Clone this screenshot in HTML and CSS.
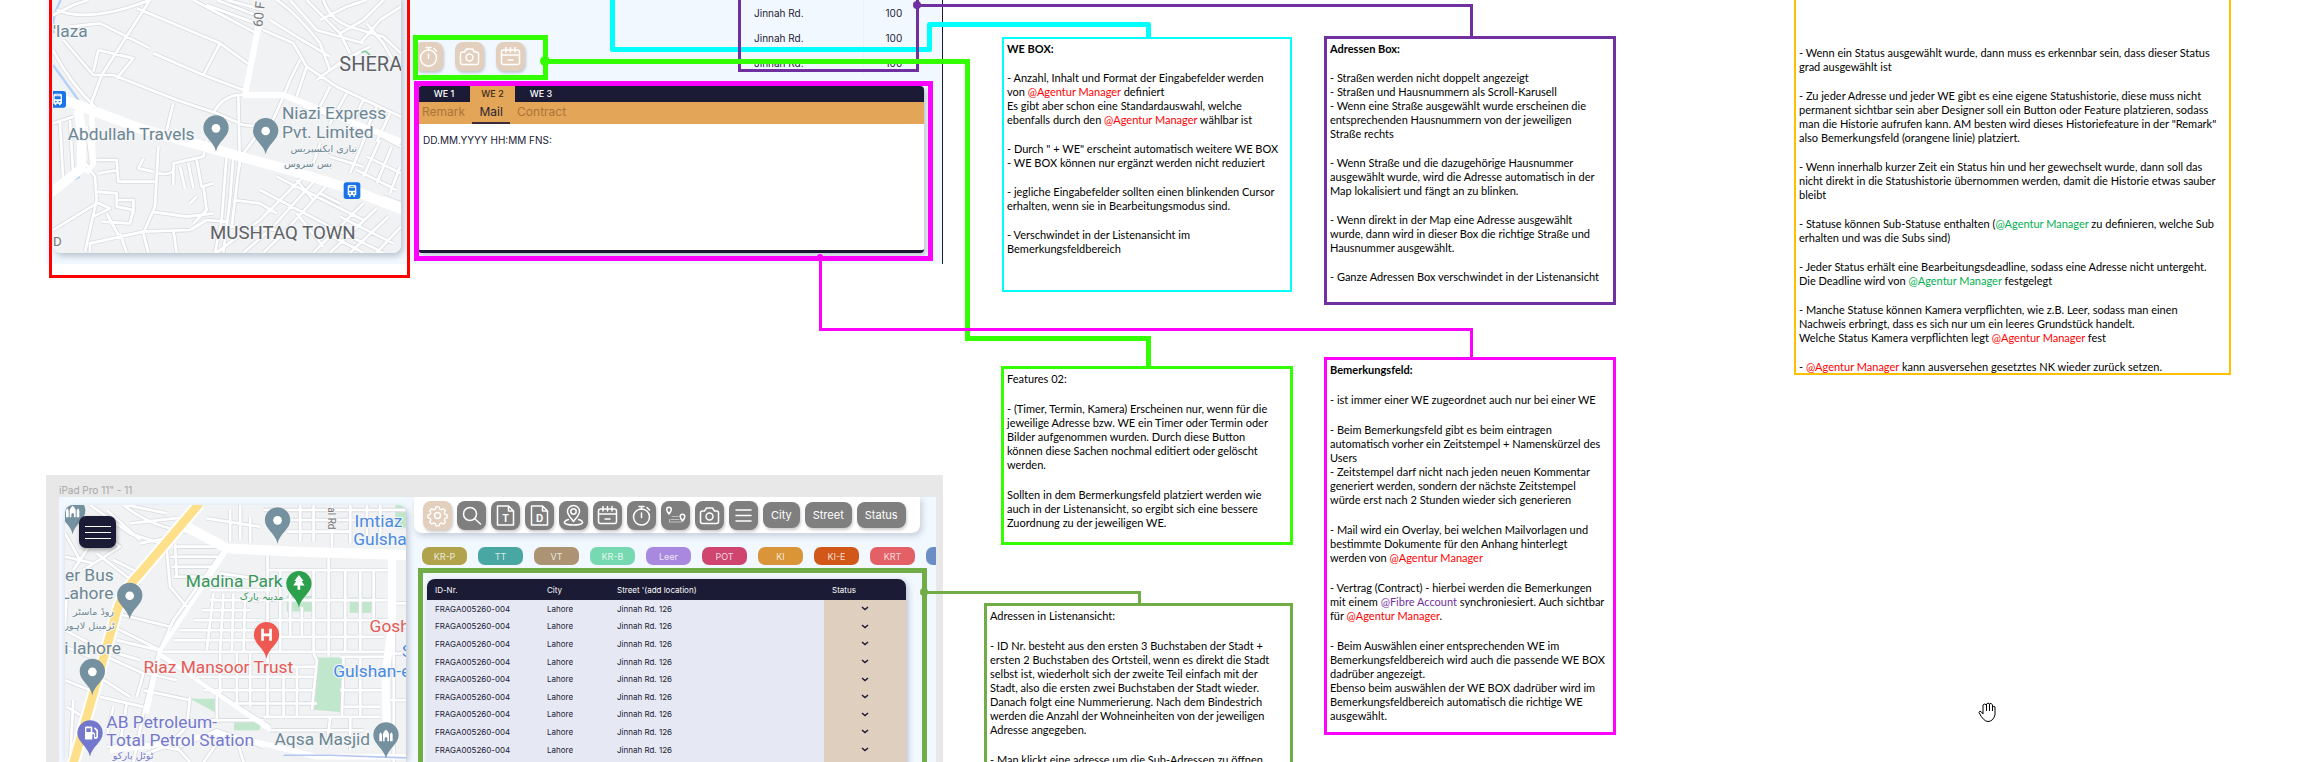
FILE: index.html
```html
<!DOCTYPE html>
<html lang="de">
<head>
<meta charset="utf-8">
<title>Board – Anmerkungen</title>
<link rel="stylesheet" href="styles.css">
</head>
<body>
<svg class="defs" aria-hidden="true">
  <defs>
    <path id="pin" d="M0 71C-6 40-38 28-38 0A38 38 0 1 1 38 0C38 28 6 40 0 71Z"/>
    <g id="bus"><rect x="-25" y="-25" width="50" height="50" rx="8" fill="#1a73e8"/><path fill="#fff" d="M-13-12q0-5 5-5H8q5 0 5 5V13H9v5H4v-5H-4v5h-5v-5h-4Z"/><path fill="#1a73e8" d="M-9-9H9V0H-9ZM-8 5h5v4h-5ZM3 5h5v4H3ZM-7-14H7v2H-7Z"/></g>
    <g id="mosque" fill="#fff"><path d="M-9 17V-4Q-9-10 0-18Q9-10 9-4V17H4V8Q0 0-4 8V17Z"/><path d="M-20 17V-4l4-6 4 6V17ZM12 17V-4l4-6 4 6V17Z"/></g>
    <symbol id="i-timer" viewBox="0 0 29 29"><circle cx="14.500" cy="16" r="8"/><path d="M12 5.500h5M14.500 6v2M14.500 12v4.500M20 6.500l2.500 2.500"/></symbol>
    <symbol id="i-camera" viewBox="0 0 29 29"><path d="M5.500 12q0-2 2-2h2l2-3h6l2 3h2q2 0 2 2v8.500q0 2-2 2h-14q-2 0-2-2Z"/><circle cx="14.500" cy="15.500" r="3.500"/></symbol>
    <symbol id="i-calendar" viewBox="0 0 29 29"><rect x="5.500" y="8" width="18" height="14.500" rx="2"/><path d="M5.500 13h18M10 5.500v4.500M14.500 5.500v4.500M19 5.500v4.500M12 18h5"/></symbol>
    <symbol id="i-gear" viewBox="0 0 29 29"><circle cx="14.500" cy="14.500" r="3"/><path d="M12.700 6h3.600l.6 2.500 1.800.8 2.300-1.400 2.300 2.300-1.400 2.300.8 1.800 2.500.6v3.200l-2.500.6-.8 1.800 1.400 2.300-2.300 2.300-2.300-1.400-1.800.8-.6 2.500h-3.600l-.6-2.500-1.800-.8-2.300 1.400-2.300-2.300 1.400-2.300-.8-1.800-2.500-.6v-3.200l2.500-.6.8-1.800-1.400-2.300 2.300-2.300 2.300 1.400 1.800-.8Z" transform="translate(1.500 .5) scale(.9)"/></symbol>
    <symbol id="i-search" viewBox="0 0 29 29"><circle cx="13" cy="13" r="6.500"/><path d="m18 18 5.500 5"/></symbol>
    <symbol id="i-doc" viewBox="0 0 29 29"><path d="M6.500 5h11l5 5v14h-16ZM17.500 5v5h5"/></symbol>
    <symbol id="i-place" viewBox="0 0 29 29"><path d="M14.500 20.500C12 17 8.500 14 8.500 10.500a6 6 0 0 1 12 0c0 3.500-3.500 6.500-6 10Z"/><circle cx="14.500" cy="10.500" r="2.700"/><path d="M9.500 18.500c-7 2 -5 5.500 5 5.500s12-3.500 5-5.500"/></symbol>
    <symbol id="i-route" viewBox="0 0 29 29"><path d="M8 13C6.500 11 5.700 10 5.700 8.500a2.300 2.300 0 0 1 4.600 0C10.300 10 9.500 11 8 13ZM21.500 20c-1.500-2-2.300-3-2.300-4.500a2.300 2.300 0 0 1 4.600 0c0 1.500-.8 2.500-2.300 4.500Z"/><path class="thin" d="M11 15.500h6M8.500 18.500v2.500h12M10 18.500h8"/></symbol>
    <symbol id="i-menu" viewBox="0 0 29 29"><path d="M7 9h15M7 14.500h15M7 20h15"/></symbol>
  </defs>
</svg>

<main class="board">

  <section class="screen screen-detail" aria-label="Detailansicht">
    <div class="map map-detail">
      <svg viewBox="69 0 1044 760" preserveAspectRatio="xMinYMin slice">
        <rect x="69" width="1044" height="760" fill="#f1f2f4"/>
        <path d="M92 0Q62 60 72 100M69 195L145 300M158 345V380M69 565L150 530" class="canal"/>
        <g class="case">
          <path id="m1" d="M69 45L130 15 175 0M80 30Q180 70 360 0M360 0L215 225 180 320M120 80L210 70 290 110M69 150Q120 250 200 325M100 120L190 225 250 225 440 300 560 340 640 375 700 380M205 150L310 175 260 235M205 150L190 215M290 110L360 145M320 25L570 130 520 225 370 160M520 225L640 270M570 130L660 195M490 0L680 100M530 15L690 75M560 0L690 50M590 0L700 30M430 310L410 390M550 340Q580 280 645 285M625 290L630 500M700 90L790 130 830 200 920 260 1113 350M720 60L800 110 900 170M740 0Q800 40 870 130L900 210M780 0L860 90 1000 130M830 0L930 100 960 160M880 0Q900 60 960 80L1060 110 1113 160M870 60L950 20 1010 0M930 100L1000 60 1060 0M990 130L1050 60 1113 20M1010 70L1060 130 1100 200M900 210L1000 150M860 240L940 180 1020 140M810 180L780 240 760 290M830 200L800 290M900 260L860 340M950 280L900 370M1000 300L950 400M1040 320L1000 410M1080 340L1040 425M820 320L1000 380 1113 440M760 290L720 380M700 380L640 460"/>
          <path id="m2" d="M69 370L130 350M90 365L100 550M120 360L130 530M160 480L195 530 200 600 165 755M200 480L260 480 265 545 375 545M205 520L265 510M340 475L325 505 370 515M385 440L375 620 340 700 355 758M385 520Q440 530 430 490L520 470 530 420M430 510V555M450 500L465 565M475 490L490 565M500 480L515 560 550 550M590 465L575 660 555 758M610 470L600 600 580 758M630 475L605 680M520 560L530 630 490 670M480 610L500 590M200 575L260 580 260 620 310 630 300 670 215 665M195 605L240 625 190 650M260 600H310V640M69 690L200 610M180 755V730L340 695 480 690 530 660 590 665M365 635L470 650 550 640M270 700L290 758M230 640L265 705M430 690L440 758M600 680L740 690M610 600L690 610 740 640M830 520L690 660 560 758M860 535L720 690 640 758M900 545L760 700 700 758M690 570L900 680 1060 758M740 530L1000 660M800 540L850 600M870 580L930 610M1000 610L850 758M1040 625L900 758M1075 650L960 758M930 650L1090 730M870 690L1000 758M1113 680L1040 758M800 640L880 740M960 520L1010 400M1000 530L1050 420M1040 550L1085 440M1080 580L1110 500M1010 470L1113 520M980 510L1100 570M900 470L1000 500M870 430L850 490M1060 590L1113 610M170 380L185 500"/>
        </g>
        <g class="minor"><use href="#m1"/><use href="#m2"/></g>
        <g class="major">
          <path d="M60 285L135 312 330 385 560 450 760 505 940 560 1120 630" stroke-width="30"/>
          <path d="M145 330L155 400V505L60 580" stroke-width="28"/>
          <path d="M185 340L190 490L170 520" stroke-width="16"/>
          <path d="M685 80L645 285L760 285L860 325L1113 425" stroke-width="18"/>
        </g>
        <path d="M995 158q12-12 28 12" fill="none" stroke="#81c995" stroke-width="5"/>
        <g class="slate">
          <text x="69" y="110">'laza</text>
          <text x="113" y="421">Abdullah Travels</text>
          <text x="756" y="357">Niazi Express</text>
          <text x="756" y="413">Pvt. Limited</text>
          <text x="981" y="456" class="ur">نیازی ایکسپریس</text>
          <text x="906" y="500" class="ur">بس سروس</text>
        </g>
        <text class="road" transform="translate(697 82) rotate(-84)">60 F</text>
        <text class="district large" x="928" y="213">SHERA</text>
        <text class="district" x="540" y="716">MUSHTAQ TOWN</text>
        <text class="road" x="69" y="738">D</text>
        <use href="#pin" x="558" y="384" fill="#75909e"/><circle cx="558" cy="385" r="13" fill="#fff"/>
        <use href="#pin" x="707" y="392" fill="#75909e"/><circle cx="707" cy="393" r="13" fill="#fff"/>
        <use href="#bus" x="83" y="298"/><use href="#bus" x="966" y="572"/>
      </svg>
    </div>

    <div class="tools tools-soft">
      <button type="button" aria-label="Timer"><svg><use href="#i-timer"/></svg></button>
      <button type="button" aria-label="Kamera"><svg><use href="#i-camera"/></svg></button>
      <button type="button" aria-label="Termin"><svg><use href="#i-calendar"/></svg></button>
    </div>

    <table class="streets">
      <tbody>
        <tr><td>Jinnah Rd.</td><td>100</td></tr>
        <tr><td>Jinnah Rd.</td><td>100</td></tr>
        <tr><td>Jinnah Rd.</td><td>100</td></tr>
      </tbody>
    </table>

    <div class="remark">
      <nav class="units"><button type="button">WE 1</button><button type="button" class="on">WE 2</button><button type="button">WE 3</button></nav>
      <nav class="kinds"><button type="button">Remark</button><button type="button" class="on">Mail</button><button type="button">Contract</button></nav>
      <p class="entry">DD.MM.YYYY HH:MM FNS:</p>
    </div>
  </section>

  <section class="frame" aria-label="Listenansicht">
    <h2 class="frame-name">iPad Pro 11" - 11</h2>
    <div class="screen-list">
      <div class="map map-list">
        <svg viewBox="105 135 1022 771" preserveAspectRatio="xMinYMin slice">
          <rect x="105" y="135" width="1022" height="771" fill="#f1f2f4"/>
          <g fill="#c0e6cc"><path d="M1095 135h32v70h-32ZM770 408h78v46h-78ZM958 412h68l-4 46h-64ZM858 592h84l-8 164-90-8ZM480 716h78v42ZM612 786h80l-4 24h-76Z"/></g>
          <g class="case">
            <path id="n1" d="M180 135L300 220 420 260M230 150L330 240M280 135Q360 200 470 215M300 190L480 170M330 250L430 230M290 135L410 160M200 280L330 380M160 330L270 260 230 230M250 300L330 340M410 270L420 380 470 440M430 260H580M420 290H570M425 320H560M430 350H540M435 250L440 350M600 150V245M630 135V240M660 170V250M530 175L690 200M700 150H1127M780 180H1090M770 215H960M810 135V245M850 135V245M905 135V270M960 135V250M1010 135V250M1050 135V250M585 265L430 480 385 580 340 760 310 906M570 340L710 360M540 420H1070M540 390H720M515 450H660M490 480H700M450 510H700M430 540H700M400 575H1070M550 400L530 570M580 400L570 575M610 400L605 575M645 400L640 575M712 275V770M750 330V575M710 330H1090M850 330V575M895 290V590M945 330V575M990 330V575M1030 330V500M720 480H1070M720 530H1060M780 400V530M815 440V530"/>
            <path id="n2" d="M250 500L400 575M260 460L420 500M260 540L385 570M230 590L340 640 320 710M105 510L200 560M105 560L180 590M110 400L105 500M230 570L330 600M190 640L300 710M210 710L340 740M250 740L230 830M290 730L270 850M385 585L720 800M350 640L440 660M340 690L480 720M570 580V700M620 580V740M660 580V740M500 650H850M520 690H850M600 730H860M720 620H860M760 620V770M800 620V770M700 770H1050M720 810H1000M930 590H1070M930 640H1060M930 690H1060M940 740H1050M990 590V770M850 580L860 600 845 750M940 590L935 770M480 710L470 800 420 850M560 700V790M480 780H700M450 860L560 810 700 860M350 880L430 850 480 906M560 850L520 906M620 840L640 906M900 770L890 860M960 770V870M1090 290V906M1127 430H1090M1127 500H1090M1127 580H1080M1127 720H1080M230 860L350 850 450 870M105 660L180 690M110 740L160 770M130 720L120 906M105 220L150 300M190 240L130 330M105 290L190 310"/>
          </g>
          <g class="minor"><use href="#n1"/><use href="#n2"/></g>
          <g class="major">
            <path d="M460 195L590 265 800 275 1127 285" stroke-width="30"/>
            <path d="M1085 290V500L1065 640 1070 830" stroke-width="24"/>
            <path d="M600 255L390 570 350 760" stroke-width="12"/>
            <path d="M240 870L420 850 560 820 720 855 860 890 1127 890" stroke-width="16"/>
            <path d="M385 580L720 810" stroke-width="12"/>
          </g>
          <path d="M760 885H900L1127 893" stroke="#b3c7f0" stroke-width="5" fill="none"/>
          <path d="M508 130L330 340Q270 400 250 490L130 910" stroke="#fff" stroke-width="38" fill="none"/>
          <path d="M508 130L330 340Q270 400 250 490L130 910" stroke="#ffe08a" stroke-width="26" fill="none"/>
          <use href="#pin" x="742" y="180" fill="#75909e"/><circle cx="742" cy="181" r="13" fill="#fff"/>
          <use href="#pin" x="299" y="406" fill="#75909e"/><circle cx="299" cy="407" r="13" fill="#fff"/>
          <use href="#pin" x="187" y="634" fill="#75909e"/><circle cx="187" cy="635" r="13" fill="#fff"/>
          <use href="#pin" x="128" y="152" fill="#75909e"/><use href="#mosque" x="128" y="155"/>
          <use href="#pin" x="1067" y="824" fill="#75909e"/><use href="#mosque" x="1067" y="826"/>
          <use href="#pin" x="806" y="371" fill="#2da04e"/><path fill="#fff" d="M806 345L820 363H814L823 376H810V389H802V376H789L798 363H792Z"/>
          <use href="#pin" x="709" y="524" fill="#ee5a52"/><path d="M697 506V542M721 506V542M697 524H721" stroke="#fff" stroke-width="8"/>
          <use href="#pin" x="180" y="818" fill="#7478cc"/><path fill="#fff" fill-rule="evenodd" d="M165 838V802q0-3 3-3H184q3 0 3 3V816q8-1 8 6v8q4 2 4-2V812l-7-7 3-4 9 9v20q-2 9-12 5V822H187v16ZM169 804v11h13v-11Z"/>
          <g class="slate">
            <text x="105" y="364">er Bus</text>
            <text x="250" y="417" text-anchor="end">Lahore</text>
            <text x="252" y="464" class="ur">روڈ ماسٹر</text>
            <text x="254" y="506" class="ur">ٹرمینل لاہور</text>
            <text x="103" y="582">i lahore</text>
            <text x="733" y="853">Aqsa Masjid</text>
          </g>
          <g class="blue"><text x="973" y="201">Imtiaz</text><text x="969" y="254">Gulshan</text><text x="909" y="650">Gulshan-e</text><text x="1115" y="590">S</text></g>
          <g class="green"><text x="467" y="382">Madina Park</text><text x="760" y="420" class="ur">مدینہ پارک</text></g>
          <g class="red"><text x="340" y="639">Riaz Mansoor Trust</text><text x="1018" y="515">Gosha</text></g>
          <g class="violet"><text x="229" y="804">AB Petroleum-</text><text x="229" y="856">Total Petrol Station</text><text x="370" y="896" class="ur">ٹوٹل پارکو</text></g>
          <text class="road small" transform="translate(892 142) rotate(90)">al Rd</text>
        </svg>
        <button type="button" class="burger" aria-label="Menü"><i></i><i></i><i></i></button>
      </div>

      <div class="side">
        <div class="tools toolbar">
          <button type="button" class="soft" aria-label="Einstellungen"><svg><use href="#i-gear"/></svg></button>
          <button type="button" aria-label="Suche"><svg><use href="#i-search"/></svg></button>
          <button type="button"><svg><use href="#i-doc"/></svg><b>T</b></button>
          <button type="button"><svg><use href="#i-doc"/></svg><b>D</b></button>
          <button type="button" aria-label="Ort"><svg><use href="#i-place"/></svg></button>
          <button type="button" aria-label="Termin"><svg><use href="#i-calendar"/></svg></button>
          <button type="button" aria-label="Timer"><svg><use href="#i-timer"/></svg></button>
          <button type="button" aria-label="Route"><svg><use href="#i-route"/></svg></button>
          <button type="button" aria-label="Kamera"><svg><use href="#i-camera"/></svg></button>
          <button type="button" aria-label="Liste"><svg><use href="#i-menu"/></svg></button>
          <button type="button" class="word">City</button>
          <button type="button" class="word">Street</button>
          <button type="button" class="word">Status</button>
        </div>
        <div class="chips">
          <button type="button" class="krp">KR-P</button><button type="button" class="tt">TT</button><button type="button" class="vt">VT</button><button type="button" class="krb">KR-B</button><button type="button" class="leer">Leer</button><button type="button" class="pot">POT</button><button type="button" class="ki">KI</button><button type="button" class="kie">KI-E</button><button type="button" class="krt">KRT</button><button type="button" class="next" aria-label="Weitere"></button>
        </div>
        <table class="list">
          <thead><tr><th class="c-id">ID-Nr.</th><th class="c-city">City</th><th>Street '(add location)</th><th class="c-status">Status</th></tr></thead>
          <tbody>
            <tr><td>FRAGA005260-004</td><td>Lahore</td><td>Jinnah Rd. 126</td><td><svg viewBox="0 0 8 5"><path d="M1 1l3 2.500L7 1"/></svg></td></tr>
            <tr><td>FRAGA005260-004</td><td>Lahore</td><td>Jinnah Rd. 126</td><td><svg viewBox="0 0 8 5"><path d="M1 1l3 2.500L7 1"/></svg></td></tr>
            <tr><td>FRAGA005260-004</td><td>Lahore</td><td>Jinnah Rd. 126</td><td><svg viewBox="0 0 8 5"><path d="M1 1l3 2.500L7 1"/></svg></td></tr>
            <tr><td>FRAGA005260-004</td><td>Lahore</td><td>Jinnah Rd. 126</td><td><svg viewBox="0 0 8 5"><path d="M1 1l3 2.500L7 1"/></svg></td></tr>
            <tr><td>FRAGA005260-004</td><td>Lahore</td><td>Jinnah Rd. 126</td><td><svg viewBox="0 0 8 5"><path d="M1 1l3 2.500L7 1"/></svg></td></tr>
            <tr><td>FRAGA005260-004</td><td>Lahore</td><td>Jinnah Rd. 126</td><td><svg viewBox="0 0 8 5"><path d="M1 1l3 2.500L7 1"/></svg></td></tr>
            <tr><td>FRAGA005260-004</td><td>Lahore</td><td>Jinnah Rd. 126</td><td><svg viewBox="0 0 8 5"><path d="M1 1l3 2.500L7 1"/></svg></td></tr>
            <tr><td>FRAGA005260-004</td><td>Lahore</td><td>Jinnah Rd. 126</td><td><svg viewBox="0 0 8 5"><path d="M1 1l3 2.500L7 1"/></svg></td></tr>
            <tr><td>FRAGA005260-004</td><td>Lahore</td><td>Jinnah Rd. 126</td><td><svg viewBox="0 0 8 5"><path d="M1 1l3 2.500L7 1"/></svg></td></tr>
            <tr><td></td><td></td><td></td><td></td></tr>
          </tbody>
        </table>
      </div>
    </div>
  </section>

  <article class="note n-we">
    <h3>WE BOX:</h3>
    <p>- Anzahl, Inhalt und Format der Eingabefelder werden<br>von <em>@Agentur Manager</em> definiert<br>Es gibt aber schon eine Standardauswahl, welche<br>ebenfalls durch den <em>@Agentur Manager</em> wählbar ist</p>
    <p>- Durch " + WE" erscheint automatisch weitere WE BOX<br>- WE BOX können nur ergänzt werden nicht reduziert</p>
    <p>- jegliche Eingabefelder sollten einen blinkenden Cursor<br>erhalten, wenn sie in Bearbeitungsmodus sind.</p>
    <p>- Verschwindet in der Listenansicht im<br>Bemerkungsfeldbereich</p>
  </article>

  <article class="note n-adr">
    <h3>Adressen Box:</h3>
    <p>- Straßen werden nicht doppelt angezeigt<br>- Straßen und Hausnummern als Scroll-Karusell<br>- Wenn eine Straße ausgewählt wurde erscheinen die<br>entsprechenden Hausnummern von der jeweiligen<br>Straße rechts</p>
    <p>- Wenn Straße und die dazugehörige Hausnummer<br>ausgewählt wurde, wird die Adresse automatisch in der<br>Map lokalisiert und fängt an zu blinken.</p>
    <p>- Wenn direkt in der Map eine Adresse ausgewählt<br>wurde, dann wird in dieser Box die richtige Straße und<br>Hausnummer ausgewählt.</p>
    <p>- Ganze Adressen Box verschwindet in der Listenansicht</p>
  </article>

  <article class="note n-status">
    <p>- Wenn ein Status ausgewählt wurde, dann muss es erkennbar sein, dass dieser Status<br>grad ausgewählt ist</p>
    <p>- Zu jeder Adresse und jeder WE gibt es eine eigene Statushistorie, diese muss nicht<br>permanent sichtbar sein aber Designer soll ein Button oder Feature platzieren, sodass<br>man die Historie aufrufen kann. AM besten wird dieses Historiefeature in der "Remark"<br>also Bemerkungsfeld (orangene linie) platziert.</p>
    <p>- Wenn innerhalb kurzer Zeit ein Status hin und her gewechselt wurde, dann soll das<br>nicht direkt in die Statushistorie übernommen werden, damit die Historie etwas sauber<br>bleibt</p>
    <p>- Statuse können Sub-Statuse enthalten (<em class="ok">@Agentur Manager</em> zu definieren, welche Sub<br>erhalten und was die Subs sind)</p>
    <p>- Jeder Status erhält eine Bearbeitungsdeadline, sodass eine Adresse nicht untergeht.<br>Die Deadline wird von <em class="ok">@Agentur Manager</em> festgelegt</p>
    <p>- Manche Statuse können Kamera verpflichten, wie z.B. Leer, sodass man einen<br>Nachweis erbringt, dass es sich nur um ein leeres Grundstück handelt.<br>Welche Status Kamera verpflichten legt <em>@Agentur Manager</em> fest</p>
    <p>- <em>@Agentur Manager</em> kann ausversehen gesetztes NK wieder zurück setzen.</p>
  </article>

  <article class="note n-feat">
    <p>Features 02:</p>
    <p>- (Timer, Termin, Kamera) Erscheinen nur, wenn für die<br>jeweilige Adresse bzw. WE ein Timer oder Termin oder<br>Bilder aufgenommen wurden. Durch diese Button<br>können diese Sachen nochmal editiert oder gelöscht<br>werden.</p>
    <p>Sollten in dem Bermerkungsfeld platziert werden wie<br>auch in der Listenansicht, so ergibt sich eine bessere<br>Zuordnung zu der jeweiligen WE.</p>
  </article>

  <article class="note n-bem">
    <h3>Bemerkungsfeld:</h3>
    <p>- ist immer einer WE zugeordnet auch nur bei einer WE</p>
    <p>- Beim Bemerkungsfeld gibt es beim eintragen<br>automatisch vorher ein Zeitstempel + Namenskürzel des<br>Users<br>- Zeitstempel darf nicht nach jeden neuen Kommentar<br>generiert werden, sondern der nächste Zeitstempel<br>würde erst nach 2 Stunden wieder sich generieren</p>
    <p>- Mail wird ein Overlay, bei welchen Mailvorlagen und<br>bestimmte Dokumente für den Anhang hinterlegt<br>werden von <em>@Agentur Manager</em></p>
    <p>- Vertrag (Contract) - hierbei werden die Bemerkungen<br>mit einem <em class="fibre">@Fibre Account</em> synchroniesiert. Auch sichtbar<br>für <em>@Agentur Manager</em>.</p>
    <p>- Beim Auswählen einer entsprechenden WE im<br>Bemerkungsfeldbereich wird auch die passende WE BOX<br>dadrüber angezeigt.<br>Ebenso beim auswählen der WE BOX dadrüber wird im<br>Bemerkungsfeldbereich automatisch die richtige WE<br>ausgewählt.</p>
  </article>

  <article class="note n-list">
    <p>Adressen in Listenansicht:</p>
    <p>- ID Nr. besteht aus den ersten 3 Buchstaben der Stadt +<br>ersten 2 Buchstaben des Ortsteil, wenn es direkt die Stadt<br>selbst ist, wiederholt sich der zweite Teil einfach mit der<br>Stadt, also die ersten zwei Buchstaben der Stadt wieder.<br>Danach folgt eine Nummerierung. Nach dem Bindestrich<br>werden die Anzahl der Wohneinheiten von der jeweiligen<br>Adresse angegeben.</p>
    <p>- Man klickt eine adresse um die Sub-Adressen zu öffnen</p>
  </article>

  <svg class="wires" aria-hidden="true">
    <g fill="none">
      <path d="M50.500 -5V276.500H408.500V-5" stroke="#f00" stroke-width="3"/>
      <path d="M612.500 -5V49.500H929.500V24.500H1148.500V39" stroke="#0ff" stroke-width="5" stroke-linejoin="round"/>
      <path d="M739.500 -5V70.500H917.500V-5M917 5.500H1471.500V37" stroke="#7030a0" stroke-width="3"/>
      <path d="M415.500 37.500H545.500V77.500H415.500ZM545 61.500H967.500V338.500H1148.500V368" stroke="#3f0" stroke-width="5"/>
      <path d="M416.500 83.500H930.500V258.500H416.500Z" stroke="#f0f" stroke-width="5"/>
      <path d="M820.500 258V329.500H1471.500V358" stroke="#f0f" stroke-width="3"/>
      <path d="M420.500 770V570.500H924.500V770" stroke="#70ad47" stroke-width="5"/>
      <path d="M924 592.500H1139.500V604" stroke="#70ad47" stroke-width="3"/>
    </g>
    <circle cx="917" cy="5" r="4" fill="#7030a0"/>
    <circle cx="545" cy="61" r="5" fill="#3f0"/>
    <circle cx="820" cy="257" r="3" fill="#f0f"/>
    <circle cx="924" cy="592" r="4" fill="#70ad47"/>
    <path transform="translate(1978 702)" fill="#fff" stroke="#000" d="M5 12V3Q6.500 1 8.500 3V9V2Q10 0 11.500 2V9V2Q13 0 14.500 3V9V5Q16 3.500 17 5V13Q15 19.500 10 19.500Q5.500 19.500 1 10.500Q1.500 8.500 3 9.500Z"/>
  </svg>
</main>
</body>
</html>
```
FILE: styles.css
```css
* { box-sizing: border-box; }
body { margin: 0; background: #fff; font-family: Inter, "Liberation Sans", sans-serif; color: #1c1b36; }
button { border: 0; padding: 0; background: none; font: inherit; color: inherit; cursor: pointer; }
h2, h3, p { margin: 0; font: inherit; }
table { border-collapse: collapse; }
td, th { padding: 0; text-align: left; font-weight: 400; }
.defs { position: absolute; width: 0; height: 0; }

/* free canvas: screens, notes and connectors are pinned to it */
.board { position: relative; width: 100%; height: 100vh; overflow: hidden; }
.wires { position: absolute; inset: 0; width: 100%; height: 100%; pointer-events: none; }

/* maps */
.map { overflow: hidden; border-radius: 8px; box-shadow: 2px 3px 6px #0b1c3340; }
.map > svg { display: block; width: 100%; height: 100%; }
.map text { font-family: Roboto, sans-serif; font-size: 52px; paint-order: stroke; stroke: #f4f6f8; stroke-width: 6px; }
.map text.ur { font-family: "DejaVu Sans", sans-serif; font-size: 29px; direction: rtl; }
.map text.road { font-size: 40px; fill: #777; }
.map text.small { font-size: 30px; }
.map text.district { font-size: 56px; fill: #5f6165; }
.map text.large { font-size: 60px; }
.case, .minor, .major { fill: none; stroke-linejoin: round; }
.case { stroke: #d9dce1; stroke-width: 13px; }
.minor { stroke: #fff; stroke-width: 8px; }
.major { stroke: #fff; }
.canal { fill: none; stroke: #b5d1fa; stroke-width: 7px; }
.slate { fill: #6d8693; }
.blue { fill: #4a8ae0; }
.green { fill: #38955a; }
.red { fill: #e65a55; }
.violet { fill: #7478cc; }

/* detail screen */
.screen-detail { position: absolute; left: 46px; top: 0; width: 897px; height: 264px; background: #f2f8ff; border-right: 1px solid #1c1b36; }
.map-detail { position: absolute; left: 7px; top: -8px; width: 348px; height: 261px; }
.map-detail > svg { height: 253px; margin-top: 8px; }
.tools { display: flex; gap: 5px; }
.tools button { position: relative; flex: none; width: 29px; height: 29px; border-radius: 8px; background: #7f7f7f; color: #fff; box-shadow: 1px 2px 3px #0003; }
.tools svg { display: block; width: 29px; height: 29px; fill: none; stroke: #fff; stroke-width: 1.5px; stroke-linecap: round; stroke-linejoin: round; }
.thin { stroke-width: 1px; opacity: .5; }
.tools button.soft, .tools-soft button { background: #e3cfbd; }
.tools-soft { position: absolute; left: 368px; top: 42px; gap: 12px; }
.streets { position: absolute; left: 694px; top: 0; width: 176px; font-size: 10px; }
.streets td { height: 25px; padding-left: 14px; }
.streets td + td { width: 53px; padding-left: 22px; border-left: 1px solid #eaf1fa; }
.remark { position: absolute; left: 372px; top: 86px; width: 506px; height: 167px; background: #fff; border-bottom: 3px solid #1c1b36; border-radius: 4px; box-shadow: 2px 2px 5px #0b1c3340; overflow: hidden; }
.units { display: flex; background: #1c1b36; color: #fff; font-size: 9px; font-weight: 500; line-height: 16px; }
.units button { width: 52px; }
.units .on { width: 45px; background: #e3a557; color: #3c2c1c; }
.kinds { display: flex; gap: 7px; padding-left: 4px; background: #e3a557; color: #a9753a; font-size: 12px; line-height: 20px; }
.kinds button { height: 22px; border-bottom: 2px solid transparent; }
.kinds .on { width: 38px; color: #2b2433; border-color: #3c2c3a; }
.entry { padding: 8px 5px; font-size: 10px; line-height: 16px; }

/* list screen */
.frame { position: absolute; left: 46px; top: 475px; width: 897px; height: 300px; padding: 0 7px 0 13px; background: #e8e8e8; }
.frame-name { font-size: 10px; line-height: 14px; padding: 8px 0 0; color: #a6a6a6; }
.screen-list { display: flex; gap: 8px; height: 278px; padding-left: 6px; background: #f2f8ff; overflow: hidden; }
.map-list { position: relative; flex: none; width: 341px; height: 257px; margin-top: 8px; overflow: visible; }
.map-list > svg { border-radius: 8px 8px 0 0; }
.burger { position: absolute; left: 14px; top: 11px; width: 37px; height: 32px; display: flex; flex-direction: column; justify-content: center; align-items: center; gap: 5px; border-radius: 7px; background: #1c1b36; box-shadow: 1px 2px 4px #0005; }
.burger i { width: 26px; height: 1px; background: #fff; }
.side { flex: 1; min-width: 0; }
.toolbar { width: 506px; height: 36px; padding: 4px 9px; background: #fff; border-radius: 0 0 8px 8px; box-shadow: 2px 3px 6px #0b1c3330; }
.toolbar b { position: absolute; inset: 11px 0 auto; font-size: 10px; line-height: 12px; text-align: center; }
.toolbar .word { width: auto; height: 26px; margin-top: 1px; padding: 0 8px; font-size: 11px; }
.chips { display: flex; gap: 11px; padding: 14px 0 14px 8px; }
.chips button { flex: none; width: 45px; height: 18px; border-radius: 7px; color: #fffc; font-size: 9px; }
.krp { background: #b1a24c; } .tt { background: #48a6a3; } .vt { background: #ab9373; } .krb { background: #76d9b2; } .leer { background: #a989e0; }
.pot { background: #cf4570; } .ki { background: #d99537; } .kie { background: #d25819; } .krt { background: #e26066; } .next { background: #6a8fc5; }
.list { width: 479px; height: 197px; margin-left: 13px; font-size: 8px; line-height: 10px; table-layout: fixed; background: #e6e9f4; border-radius: 8px 8px 0 0; overflow: hidden; box-shadow: 2px 2px 6px #0b1c3340; }
.list thead { height: 21px; }
.list th { height: 21px; padding-left: 8px; background: #1c1b36; color: #fff; }
.list td { height: 17px; padding-left: 8px; }
.list th:nth-child(2), .list td:nth-child(2), .list th:nth-child(3), .list td:nth-child(3) { padding-left: 0; }
.c-id { width: 120px; } .c-city { width: 70px; } .c-status { width: 82px; }
.list td:last-child { padding: 0; background: #decfbe; }
.list svg { display: block; width: 8px; height: 5px; margin: 0 auto; fill: none; stroke: #1c1b36; stroke-width: 1.5px; }

/* notes */
.note { position: absolute; border: 3px solid; padding: 3px; overflow: hidden; font-family: Lato, "Open Sans", sans-serif; font-size: 11px; line-height: 14px; white-space: nowrap; background: #fff; }
.note h3, .note p { color: #000; }
.note h3 { font-weight: 700; }
.note > * + * { margin-top: 16px; }
.note em { font-style: normal; color: #f00; }
.note .ok { color: #00b050; }
.note .fibre { color: #7030a0; }
.n-we > * + *, .n-adr > * + *, .n-status > * + * { margin-top: 15px; }
.n-we { left: 1002px; top: 37px; width: 290px; padding-bottom: 34px; border: 2px solid #0ff; }
.n-adr { left: 1324px; top: 36px; width: 292px; padding-bottom: 18px; border-color: #7030a0; }
.n-status { left: 1794px; top: -20px; width: 437px; height: 395px; padding-top: 64px; border: 2px solid #ffc000; }
.n-feat { left: 1001px; top: 366px; width: 292px; padding-bottom: 12px; border-color: #3f0; }
.n-bem { left: 1324px; top: 357px; width: 292px; padding-bottom: 9px; border-color: #f0f; }
.n-list { left: 984px; top: 603px; width: 309px; border-color: #70ad47; }
```
